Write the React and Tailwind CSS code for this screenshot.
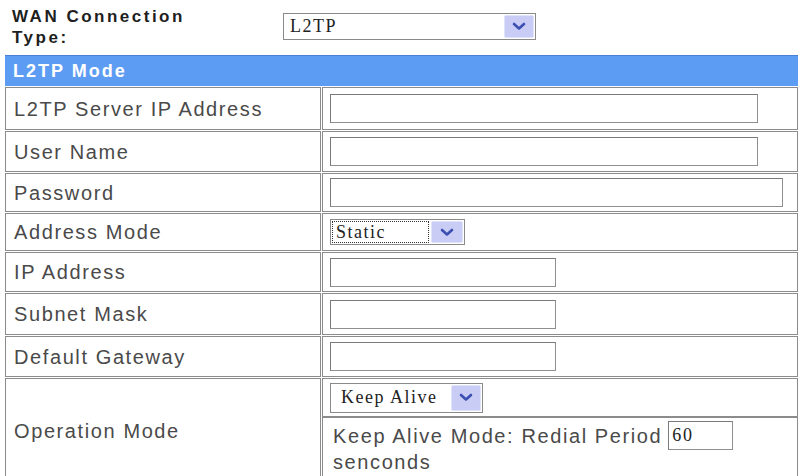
import React from "react";

const Chevron = () => (
  <svg width="14" height="9" viewBox="0 0 14 9">
    <polyline points="2,2 7,6.5 12,2" fill="none" stroke="#3b4fb0" strokeWidth="2.6" strokeLinecap="round" strokeLinejoin="round" />
  </svg>
);

const ArrowBtn = ({ w = "w-[31px]" }) => (
  <div className={`${w} self-stretch m-[1px] flex items-center justify-center bg-[#c9cdf6] border border-[#dfe2fb] rounded-[2px]`}>
    <Chevron />
  </div>
);

const TextBox = ({ w, value }) => (
  <div className={`${w} h-[29px] border border-[#8f8f8f] border-t-[#7a7a7a] border-l-[#7a7a7a] bg-white flex items-center px-[3px] font-['Liberation_Serif'] text-[18px] text-[#222]`}>
    {value}
  </div>
);

const rows = [
  { label: "L2TP Server IP Address", h: "h-[43px]", w: "w-[428px]" },
  { label: "User Name", h: "h-[41px]", w: "w-[428px]" },
  { label: "Password", h: "h-[39px]", w: "w-[453px]" },
  { label: "Address Mode", h: "h-[38px]", select: true },
  { label: "IP Address", h: "h-[40px]", w: "w-[226px]" },
  { label: "Subnet Mask", h: "h-[42px]", w: "w-[226px]" },
  { label: "Default Gateway", h: "h-[41px]", w: "w-[226px]" },
];

const labelCls =
  "w-[316px] shrink-0 border border-[#8c8c8c] bg-white flex items-center pl-[8px] text-[20px] tracking-[1.6px] text-[#4a4a4a]";
const valueCls = "flex-1 border border-[#8c8c8c] bg-white flex items-center pl-[7px]";

export default function App() {
  return (
    <div className="w-[798px] h-[476px] overflow-hidden bg-white font-['Liberation_Sans',sans-serif]">
      <div className="flex items-start pt-[6px] h-[55px]">
        <div className="w-[283px] pl-[12px] font-bold text-[17px] leading-[21px] tracking-[2.5px] text-[#1e1e1e]">
          <div>WAN Connection</div>
          <div>Type:</div>
        </div>
        <div className="mt-[7px] w-[253px] h-[27px] border border-[#8a8a8a] bg-white flex items-stretch">
          <div className="flex-1 flex items-center pl-[6px] font-['Liberation_Serif',serif] text-[18px] tracking-[1.5px] text-[#222]">
            L2TP
          </div>
          <ArrowBtn w="w-[30px]" />
        </div>
      </div>

      <div className="ml-[5px] w-[793px] flex flex-col gap-[1px]">
        <div className="h-[31px] bg-[#5d9cf3] border-t border-[#4a7fd6] flex items-center pl-[8px] font-bold text-[18px] tracking-[2px] text-white">
          L2TP Mode
        </div>

        {rows.map((r) => (
          <div key={r.label} className={`flex gap-[1px] ${r.h}`}>
            <div className={labelCls}>{r.label}</div>
            <div className={valueCls}>
              {r.select ? (
                <div className="w-[135px] h-[26px] border border-[#8a8a8a] bg-white flex items-stretch">
                  <div className="w-[99px] m-[1px] border border-dotted border-[#333] flex items-center pl-[3px] font-['Liberation_Serif',serif] text-[18px] tracking-[1.5px] text-[#222]">
                    Static
                  </div>
                  <ArrowBtn w="w-[32px]" />
                </div>
              ) : (
                <TextBox w={r.w} />
              )}
            </div>
          </div>
        ))}

        <div className="flex gap-[1px] h-[105px]">
          <div className={labelCls}>Operation Mode</div>
          <div className="flex-1 border border-[#8c8c8c] bg-white flex flex-col">
            <div className="h-[39px] border-b-[2px] border-[#8c8c8c] flex items-center pl-[7px]">
              <div className="w-[153px] h-[30px] border border-[#8a8a8a] bg-white flex items-stretch">
                <div className="flex-1 flex items-center pl-[10px] font-['Liberation_Serif',serif] text-[18px] tracking-[1.5px] text-[#222]">
                  Keep Alive
                </div>
                <ArrowBtn w="w-[30px]" />
              </div>
            </div>
            <div className="flex-1 pl-[10px] pt-[3px] text-[20px] tracking-[1.6px] text-[#4a4a4a]">
              <div className="flex items-center h-[29px]">
                <span>Keep Alive Mode: Redial Period</span>
                <div className="ml-[6px]">
                  <TextBox w="w-[65px]" value="60" />
                </div>
              </div>
              <div className="leading-[24px]">senconds</div>
            </div>
          </div>
        </div>
      </div>
    </div>
  );
}
